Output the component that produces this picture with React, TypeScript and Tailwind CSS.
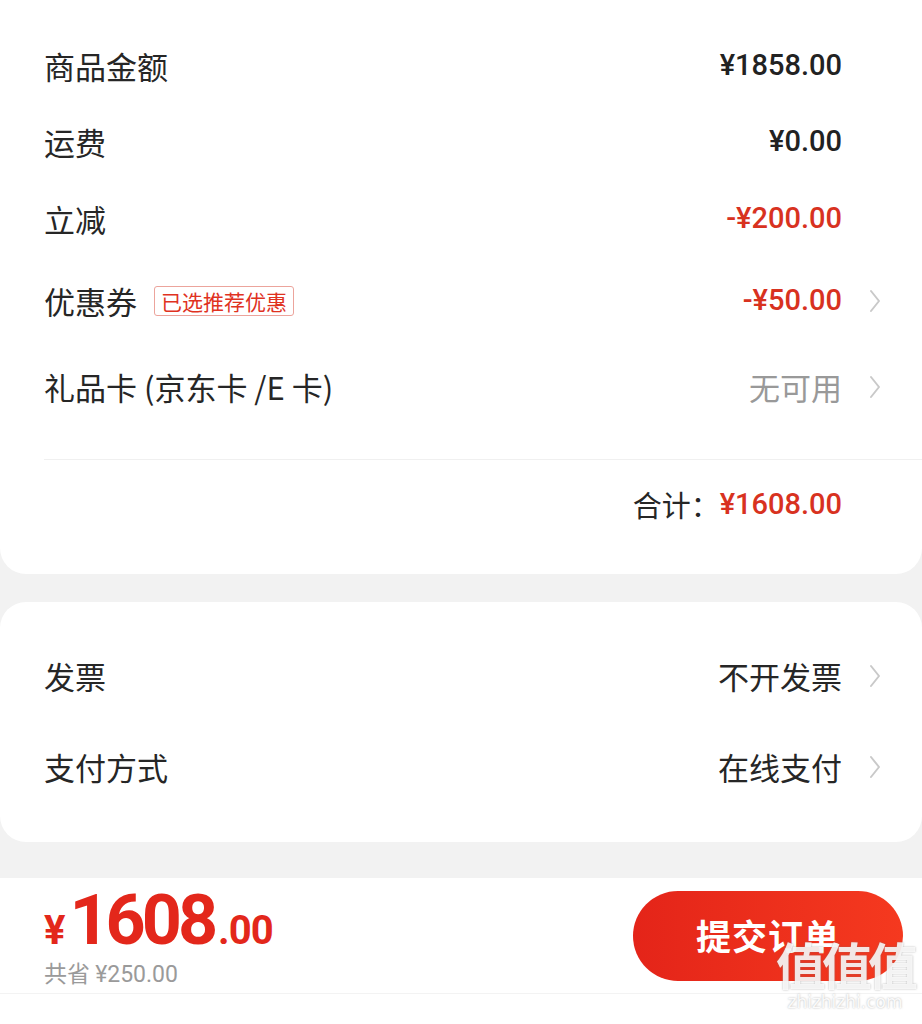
import React from "react";

const font = { fontFamily: '"Noto Sans CJK SC", "Noto Sans", sans-serif' };
const num = { fontFamily: 'Roboto, "Noto Sans CJK SC", sans-serif' };

const Chevron: React.FC = () => (
  <svg width="14" height="26" viewBox="0 0 14 26" className="ml-[26px] shrink-0">
    <polyline points="3,3 11,13 3,23" fill="none" stroke="#c9c9c9" strokeWidth="2" strokeLinecap="round" strokeLinejoin="round" />
  </svg>
);

interface RowProps {
  label: React.ReactNode;
  value: React.ReactNode;
  h: string;
  arrow?: boolean;
}

const Row: React.FC<RowProps> = ({ label, value, h, arrow }) => (
  <div className={`flex items-center justify-between ${h}`}>
    <div className="flex items-center text-[31px] text-[#262626]">{label}</div>
    <div className={`flex items-center ${arrow ? "" : "pr-[40px]"}`}>{value}</div>
  </div>
);

export default function App() {
  return (
    <div className="min-h-[1024px] bg-[#f2f2f2] w-[922px] relative overflow-hidden" style={font}>
      <div className="bg-white rounded-b-[26px] pt-[28px] pb-[24px] pl-[44px] pr-[40px]">
        <Row
          h="h-[76px]"
          label="商品金额"
          value={<span className="text-[29px] font-medium text-[#222]" style={num}>¥1858.00</span>}
        />
        <Row
          h="h-[76px]"
          label="运费"
          value={<span className="text-[29px] font-medium text-[#222]" style={num}>¥0.00</span>}
        />
        <Row
          h="h-[78px]"
          label="立减"
          value={<span className="text-[29px] font-medium text-[#d8321f]" style={num}>-¥200.00</span>}
        />
        <Row
          h="h-[86px]"
          arrow
          label={
            <>
              <span>优惠券</span>
              <span className="ml-[17px] border border-[#eca49c] rounded-[3px] px-[6px] h-[30px] flex items-center text-[21px] text-[#e0321f] leading-none">
                已选推荐优惠
              </span>
            </>
          }
          value={
            <>
              <span className="text-[29px] font-medium text-[#d8321f]" style={num}>-¥50.00</span>
              <Chevron />
            </>
          }
        />
        <Row
          h="h-[86px]"
          arrow
          label="礼品卡 (京东卡 /E 卡)"
          value={
            <>
              <span className="text-[31px] text-[#999]">无可用</span>
              <Chevron />
            </>
          }
        />
        <div className="h-[29px]" />
        <div className="border-t border-[#f0f0f0] -mr-[40px]" />
        <div className="h-[90px] flex items-center justify-end pr-[40px]">
          <span className="text-[29px] text-[#262626]">合计：</span>
          <span className="text-[29px] font-medium text-[#d8321f]" style={num}>¥1608.00</span>
        </div>
      </div>

      <div className="mt-[28px] bg-white rounded-[26px] pt-[28px] pb-[30px] pl-[44px] pr-[40px]">
        <Row
          h="h-[92px]"
          arrow
          label="发票"
          value={
            <>
              <span className="text-[31px] text-[#262626]">不开发票</span>
              <Chevron />
            </>
          }
        />
        <Row
          h="h-[90px]"
          arrow
          label="支付方式"
          value={
            <>
              <span className="text-[31px] text-[#262626]">在线支付</span>
              <Chevron />
            </>
          }
        />
      </div>

      <div className="mt-[36px] bg-white h-[147px]">
        <div className="h-[116px] border-b border-[#f3f3f3] flex items-center justify-between pl-[44px] pr-[19px]">
          <div className="flex flex-col">
            <div className="flex items-baseline text-[#e3271b] font-bold leading-none" style={num}>
              <span className="text-[40px] mr-[4px]">¥</span>
              <span className="text-[70px] tracking-[-4px]">1608</span>
              <span className="text-[40px] ml-[4px] tracking-[-1px]">.00</span>
            </div>
            <div className="text-[23px] text-[#9a9a9a] mt-[6px] leading-none">
              共省 <span style={num}>¥250.00</span>
            </div>
          </div>
          <div className="w-[270px] h-[90px] rounded-full bg-gradient-to-r from-[#e42419] to-[#f5391f] flex items-center justify-center text-white text-[35px] font-bold tracking-[1px]">
            提交订单
          </div>
        </div>
      </div>

      <div className="absolute left-[772px] top-[938px] w-[146px] flex flex-col items-center pointer-events-none select-none">
        <span
          className="text-[50px] leading-none font-bold text-white/85 tracking-[-4px]"
          style={{ textShadow: "0 0 2px rgba(120,120,120,0.6)" }}
        >
          值值值
        </span>
        <span
          className="text-[17px] leading-none text-white/90 mt-[6px] whitespace-nowrap"
          style={{ fontFamily: '"DejaVu Sans", sans-serif', textShadow: "0 0 2px rgba(120,120,120,0.6)" }}
        >
          zhizhizhi.com
        </span>
      </div>
    </div>
  );
}
